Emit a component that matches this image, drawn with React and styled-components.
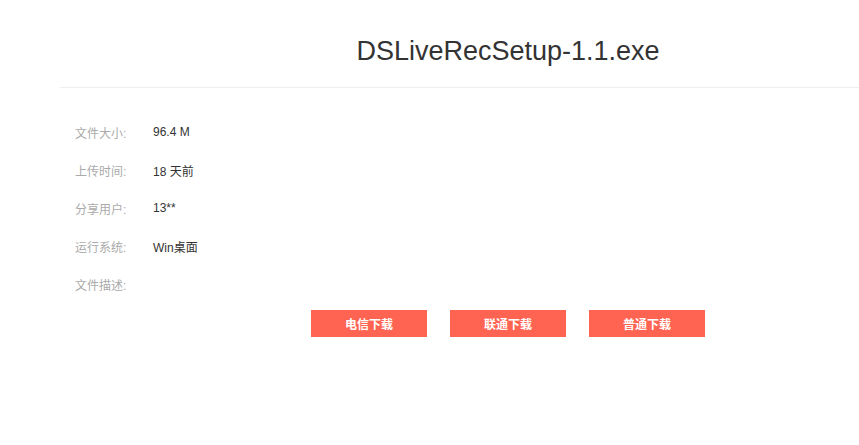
import React from "react";
import styled, { createGlobalStyle } from "styled-components";

const Global = createGlobalStyle`
  html, body { margin: 0; padding: 0; background: #fff; overflow: hidden; }
  body { font-family: "Liberation Sans", "Noto Sans CJK SC", Arial, sans-serif; }
`;

const Viewport = styled.div`
  width: 100vw;
  overflow: hidden;
`;

const Page = styled.div`
  width: 896px;
  margin-left: 60px;
`;

const Header = styled.div`
  padding: 36px 0 20px;
  border-bottom: 1px solid #eeeeee;
  text-align: center;
`;

const Title = styled.h1`
  margin: 0;
  font-size: 27px;
  line-height: 31px;
  font-weight: normal;
  color: #333;
`;

const InfoList = styled.dl`
  margin: 0;
  padding: 25px 0 0 15px;
`;

const Row = styled.div`
  display: flex;
  align-items: center;
  height: 38px;
  font-size: 12px;
`;

const Label = styled.dt`
  width: 78px;
  color: #aaaaaa;
`;

const Value = styled.dd`
  margin: 0;
  color: #333;
`;

const Actions = styled.div`
  display: flex;
  justify-content: center;
  gap: 23px;
  margin-top: 7px;
`;

const Button = styled.a`
  display: flex;
  align-items: center;
  justify-content: center;
  width: 116px;
  height: 27px;
  background: #ff6452;
  color: #fff;
  font-size: 12px;
  font-weight: bold;
  text-decoration: none;
  box-shadow: 0 1px 0 #dddddd;
  cursor: pointer;
`;

const info = [
  ["文件大小:", "96.4 M"],
  ["上传时间:", "18 天前"],
  ["分享用户:", "13**"],
  ["运行系统:", "Win桌面"],
  ["文件描述:", ""],
];

export default function App() {
  return (
    <>
      <Global />
      <Viewport>
        <Page>
          <Header>
            <Title>DSLiveRecSetup-1.1.exe</Title>
          </Header>
          <InfoList>
            {info.map(([k, v]) => (
              <Row key={k}>
                <Label>{k}</Label>
                <Value>{v}</Value>
              </Row>
            ))}
          </InfoList>
          <Actions>
            <Button>电信下载</Button>
            <Button>联通下载</Button>
            <Button>普通下载</Button>
          </Actions>
        </Page>
      </Viewport>
    </>
  );
}
